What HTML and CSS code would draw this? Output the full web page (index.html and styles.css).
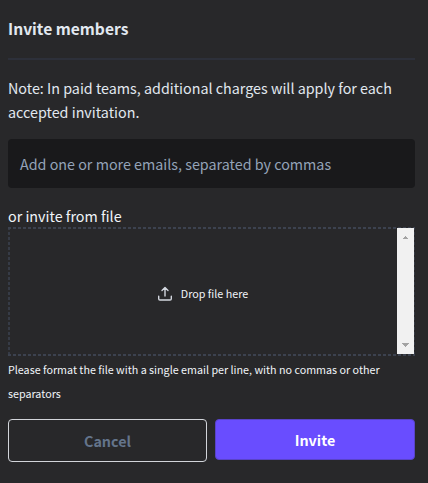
FILE: index.html
```html
<!DOCTYPE html>
<html lang="en">
<head>
<meta charset="utf-8">
<title>Invite members</title>
<link rel="stylesheet" href="styles.css">
</head>
<body>
<main class="dialog">
  <header class="head"><h1 class="title">Invite members</h1></header>
  <p class="note">Note: In paid teams, additional charges will apply for each<br>accepted invitation.</p>
  <div class="field"><span class="placeholder">Add one or more emails, separated by commas</span></div>
  <div class="label"><span>or invite from file</span></div>
  <div class="drop">
    <div class="drop-content">
      <svg class="upload" width="16" height="16" viewBox="0 0 16 16" fill="none" stroke="#d3d7df" stroke-width="1.4" stroke-linecap="round" stroke-linejoin="round"><path d="M1.7 10.3v2.5q0 1.2 1.2 1.2h10.2q1.2 0 1.2-1.2v-2.5M8 10V1.8M5 4.5l3-3 3 3"/></svg>
      <span class="drop-text">Drop file here</span>
    </div>
    <div class="scrollbar">
      <svg width="5" height="3" viewBox="0 0 5 3" shape-rendering="crispEdges" fill="#a3a3a3"><path d="M2 0h1v1h1v1h1v1H0V2h1V1h1z"/></svg>
      <svg width="7" height="4" viewBox="0 0 7 4" shape-rendering="crispEdges" fill="#a3a3a3"><path d="M0 0h7v1H6v1H5v1H4v1H3V3H2V2H1V1H0z"/></svg>
    </div>
  </div>
  <p class="hint">Please format the file with a single email per line, with no commas or other<br>separators</p>
  <div class="actions">
    <button class="btn cancel">Cancel</button>
    <button class="btn invite">Invite</button>
  </div>
</main>
</body>
</html>
```
FILE: styles.css
```css
* { box-sizing: border-box; }
body {
  margin: 0;
  background: #28282a;
  color: #e2e8f0;
  font-family: "Noto Sans CJK SC", "Noto Sans", sans-serif;
  font-size: 14.32px;
  line-height: 24px;
}
.dialog { width: 428px; height: 483px; padding: 0 13px 0 8px; }
.head { height: 60px; padding-top: 16px; border-bottom: 2px solid #2d303a; }
.title { margin: 0; font-size: 15.6px; line-height: 24px; font-weight: 700; }
.note { margin: 0; padding-top: 16px; height: 79px; white-space: nowrap; }
.field { height: 49px; padding: 13px 12px; border-radius: 4px; background: #19191b; color: #94a3b8; white-space: nowrap; }
.label { height: 39px; padding-top: 16px; color: #f1f5f9; }
.drop {
  display: flex;
  height: 129px;
  padding: 1px 1px 1px 0;
  background:
    repeating-linear-gradient(90deg, #3c424f 0 3px, transparent 3px 5px) 0 0 / 100% 2px no-repeat,
    repeating-linear-gradient(90deg, #3c424f 0 3px, transparent 3px 5px) 0 100% / 100% 2px no-repeat,
    repeating-linear-gradient(#363b46 0 3px, transparent 3px 5px) 0 0 / 2px 100% no-repeat,
    repeating-linear-gradient(#363b46 0 3px, transparent 3px 5px) 100% 0 / 2px 100% no-repeat;
}
.drop-content { flex: 1; display: flex; align-items: center; justify-content: center; gap: 8px; padding-top: 4px; }
.drop-text { font-size: 10.74px; color: #f1f5f9; }
.scrollbar { width: 17px; height: 126px; background: #f1f1f1; display: flex; flex-direction: column; align-items: center; justify-content: space-between; padding: 8px 0 7px; }
.hint { margin: 0; padding-top: 2px; height: 63px; font-size: 10.74px; color: #f1f5f9; white-space: nowrap; }
.actions { display: flex; gap: 8px; align-items: flex-start; }
.btn { font: 700 14.32px/24px "Noto Sans CJK SC", sans-serif; border-radius: 4px; padding: 0; }
.cancel { width: 199px; height: 43px; background: transparent; border: 1px solid #d2d5da; color: #64748b; }
.invite { width: 200px; height: 41px; background: #694dff; border: 1px solid #5943c8; color: #fff; }
```
